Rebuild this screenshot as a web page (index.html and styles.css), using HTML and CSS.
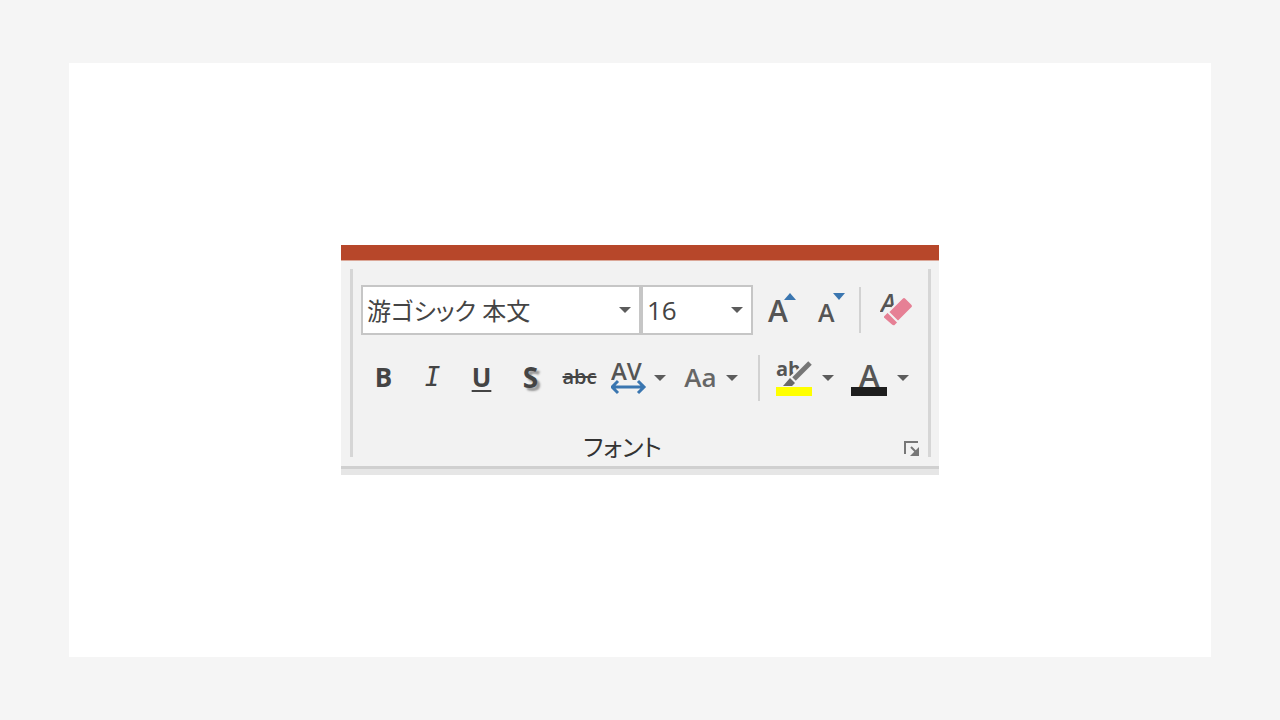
FILE: index.html
```
<!DOCTYPE html>
<html lang="ja">
<head>
	<meta charset="utf-8">
	<title>フォント</title>
	<link rel="stylesheet" href="styles.css">
</head>
<body>
	<main class="card">
		<div class="ribbon">
			<div class="titlebar"></div>
			<section class="group">
				<div class="row fields">
					<div class="combo combo-font">
						<select aria-label="フォント名">
							<option>游ゴシック 本文</option>
						</select>
						<svg class="caret" viewBox="0 0 12 6"><path d="M0 0h12L6 6z"/></svg>
					</div>
					<div class="combo combo-size">
						<select aria-label="フォント サイズ">
							<option>16</option>
						</select>
						<svg class="caret" viewBox="0 0 12 6"><path d="M0 0h12L6 6z"/></svg>
					</div>
					<button class="tool first" aria-label="拡大">
						<svg width="30" height="50" viewBox="0 -7 30 50">
							<text class="glyph" x="1" y="30" font-size="30">A</text>
							<path class="blue" d="M17 8l6-7 6 7z"/>
						</svg>
					</button>
					<button class="tool" aria-label="縮小">
						<svg width="28" height="50" viewBox="0 -7 28 50">
							<text class="glyph" x="1" y="30" font-size="25">A</text>
							<path class="blue" d="M16 1h12l-6 7z"/>
						</svg>
					</button>
					<span class="sep"></span>
					<button class="tool" aria-label="書式のクリア">
						<svg width="32" height="50" viewBox="0 -7 32 50">
							<text class="glyph slant" x="1" y="20" font-size="25">A</text>
							<g stroke="#f2f2f2" stroke-width="2">
								<path fill="#e68095" d="M3 24l6-6 11 11-5 5q-2 1-4-1l-8-7z"/>
								<path fill="#e68095" d="M8 20L22 6q2-2 4 0l6 6q2 2 0 4L18 30z"/>
							</g>
						</svg>
					</button>
				</div>
				<div class="row styles">
					<button class="tool bold">B</button>
					<button class="tool italic">I</button>
					<button class="tool underline">U</button>
					<button class="tool shadow">S</button>
					<button class="tool strike">abc</button>
					<button class="tool" aria-label="文字の間隔">
						<svg width="36" height="50" viewBox="0 -7 36 50">
							<text class="glyph" x="0" y="20" font-size="24">AV</text>
							<path class="arrow" d="M1 27h32M7 21l-6 6 6 6M27 21l6 6-6 6"/>
						</svg>
					</button>
					<button class="drop" aria-label="文字の間隔のメニュー"><svg class="caret" viewBox="0 0 12 6"><path d="M0 0h12L6 6z"/></svg></button>
					<button class="tool case">Aa</button>
					<button class="drop" aria-label="文字種のメニュー"><svg class="caret" viewBox="0 0 12 6"><path d="M0 0h12L6 6z"/></svg></button>
					<span class="sep"></span>
					<button class="tool" aria-label="蛍光ペン">
						<svg width="36" height="50" viewBox="0 -6 36 50">
							<text class="glyph heavy" x="0" y="17" font-size="20">ab</text>
							<path fill="none" stroke="#f2f2f2" stroke-width="8" d="M17 20L34 4"/>
							<path fill="none" stroke="#767676" stroke-width="5" d="M18 20L34 4"/>
							<path fill="#686868" d="M14 19l5 5-3 3H7z"/>
							<path fill="#ffff00" d="M0 28h36v9H0z"/>
						</svg>
					</button>
					<button class="drop wide" aria-label="蛍光ペンのメニュー"><svg class="caret" viewBox="0 0 12 6"><path d="M0 0h12L6 6z"/></svg></button>
					<button class="tool color" aria-label="フォントの色">
						<svg width="36" height="50" viewBox="0 -6 36 50">
							<text class="glyph" x="8" y="28" font-size="31">A</text>
							<path fill="#1e1e1e" d="M0 28h36v9H0z"/>
						</svg>
					</button>
					<button class="drop wide" aria-label="フォントの色のメニュー"><svg class="caret" viewBox="0 0 12 6"><path d="M0 0h12L6 6z"/></svg></button>
				</div>
				<div class="caption">
					<span>フォント</span>
					<button class="launcher" aria-label="フォントの設定">
						<svg width="16" height="16" viewBox="0 0 16 16">
							<path fill="none" stroke="#777" stroke-width="2" d="M1 13V1h13M7 6l6 6"/>
							<path fill="#777" d="M15 6v9H6z"/>
						</svg>
					</button>
				</div>
			</section>
			<div class="edge"></div>
		</div>
	</main>
</body>
</html>
```
FILE: styles.css
```
*{
	box-sizing: border-box;
}
body{
	margin: 0;
	padding: 63px 69px;
	min-height: 100vh;
	display: flex;
	background: #f5f5f5;
	color: #444;
	font-family: "Open Sans", "Noto Sans CJK JP", sans-serif;
}
.card{
	flex: 1;
	display: flex;
	align-items: center;
	justify-content: center;
	background: #fff;
}
.ribbon{
	background: #f2f2f2;
}
.titlebar{
	height: 16px;
	background: #b7472a;
	border-bottom: 1px solid #dba798;
}
.group{
	margin: 8px 8px 9px 9px;
	padding: 16px 8px 0 6px;
	border: solid #d6d6d6;
	border-width: 0 3px;
}
.edge{
	height: 9px;
	background: #e6e6e6;
	border-top: 3px solid #d0d0d0;
}
.row{
	display: flex;
	align-items: center;
	height: 50px;
}
.fields{
	padding-left: 2px;
}
.styles{
	margin-top: 18px;
}
button{
	padding: 0;
	border: 0;
	background: none;
	color: #444;
	font-family: inherit;
}
svg{
	display: block;
}

/* combo boxes */
.combo{
	position: relative;
	height: 50px;
}
.combo-font{
	width: 280px;
}
.combo-size{
	width: 112px;
}
.combo select{
	appearance: none;
	width: 100%;
	height: 100%;
	padding: 0 4px;
	border: 2px solid #c6c6c6;
	border-radius: 0;
	background: #fff;
	color: #444;
	font-family: inherit;
	font-size: 26px;
	font-feature-settings: "palt";
}
.combo-font select{
	font-size: 24px;
}
.combo .caret{
	position: absolute;
	right: 10px;
	top: 22px;
}
.caret{
	width: 12px;
	height: 6px;
	margin: 0 auto;
	fill: #5c5c5c;
}

/* buttons */
.tool{
	width: 49px;
	height: 50px;
	font-size: 26px;
	line-height: 46px;
}
.bold, .italic, .underline, .shadow, .strike, .case{
	padding-bottom: 2px;
}
.tool svg{
	margin: 0 auto;
}
.first{
	margin-left: 4px;
}
.sep{
	width: 2px;
	height: 46px;
	margin: 0 10px 0 4px;
	background: #d2d2d2;
}
.styles .sep{
	margin: 0 9px 0 19px;
}
.bold, .underline, .shadow{
	font-weight: bold;
}
.italic{
	font-family: "DejaVu Sans Mono", monospace;
	font-size: 26px;
	font-style: italic;
}
.underline{
	text-decoration: underline;
	text-decoration-thickness: 2px;
	text-underline-offset: 3px;
}
.shadow{
	font-size: 28px;
	text-shadow: 3px 3px 2px #999;
}
.strike{
	font-size: 20px;
	font-weight: 600;
	text-decoration: line-through;
	text-decoration-thickness: 2px;
}
.drop{
	width: 14px;
	height: 50px;
}
.wide{
	width: 20px;
}
.case{
	margin-left: 9px;
	color: #666;
	font-weight: 600;
}
.color{
	margin-left: 6px;
}
.glyph{
	fill: #555;
	font-weight: 600;
}
.heavy{
	font-weight: bold;
}
.slant{
	font-style: italic;
}
.blue{
	fill: #3a76b0;
}
.arrow{
	fill: none;
	stroke: #3a76b0;
	stroke-width: 3;
}

/* group name */
.caption{
	display: grid;
	grid-template-columns: 1fr auto 1fr 34px;
	align-items: end;
	height: 54px;
	color: #333;
	font-size: 24px;
	line-height: 20px;
	font-feature-settings: "palt";
}
.caption span{
	grid-column: 2;
}
.launcher{
	grid-column: 4;
	justify-self: end;
}
```
